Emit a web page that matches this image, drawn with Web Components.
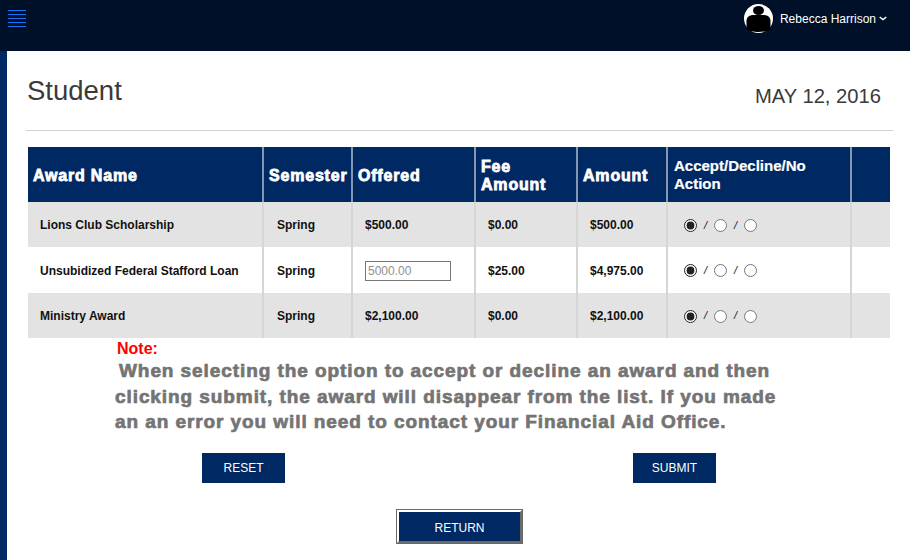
<!DOCTYPE html>
<html lang="en">

<head>
    <meta charset="UTF-8">
    <title>Student</title>
    <style>
        html, body { margin: 0; padding: 0; background: #fff; }
        body { font-family: "Liberation Sans", Arial, sans-serif; }
    </style>
</head>

<body>
    <template id="t-topbar">
        <style>
            :host { display: flex; height: 51px; background: #001029; justify-content: space-between; box-sizing: border-box; }
            .burger { display: flex; flex-direction: column; gap: 3px; width: 18px; margin: 10px 0 0 8px; }
            .burger i { display: block; height: 1px; background: #1673f5; }
            .user { display: flex; align-items: center; height: 37px; color: #fff; font-size: 12px; margin-right: 23px; }
            svg { margin-right: 7px; }
            .chev { margin: 0 0 0 3px; }
        </style>
        <div class="burger"><i></i><i></i><i></i><i></i><i></i></div>
        <div class="user">
            <svg width="29" height="29" viewBox="0 0 29 29">
                <circle cx="14.5" cy="14.5" r="14.5" fill="#fff"/>
                <ellipse cx="14.5" cy="6.500" rx="5.500" ry="4.500" fill="#000"/>
                <path d="M2.500 17c0-4 3-6 7-6h10c4 0 7 2 7 6v8c-2 2-7 3-12 3s-10-1-12-3z" fill="#000"/>
            </svg>
            <span class="name"><slot></slot></span>
            <svg class="chev" width="8" height="5" viewBox="0 0 8 5"><path d="M.7 1l3.300 2.500L7.300 1" fill="none" stroke="#fff" stroke-width="1.500"/></svg>
        </div>
    </template>

    <template id="t-heading">
        <style>
            :host { display: flex; justify-content: space-between; width: 867px; height: 79px; border-bottom: 1px solid #d0d0d0; color: #3a3a3a; }
            h1 { margin: 24px 0 0 1px; font-size: 27.500px; line-height: 32px; font-weight: 400; }
            .date { margin: 33px 12px 0 0; font-size: 20.200px; line-height: 24px; }
        </style>
        <h1><slot name="title"></slot></h1>
        <div class="date"><slot name="date"></slot></div>
    </template>

    <template id="t-table">
        <style>
            :host { display: block; width: 862px; margin: 16px 0 0 2px; }
            .head { display: grid; grid-template-columns: 236px 89px 123px 102px 90px 184px 37px; height: 55px; background: #002862; color: #fff; font-size: 16px; line-height: 18px; font-weight: 700; -webkit-text-stroke: .8px #fff; letter-spacing: .8px; }
            .head div { display: flex; align-items: center; box-sizing: border-box; padding: 2px 0 0 5px; border-right: 2px solid #8496b2; white-space: nowrap; }
            .head div:last-child { border: 0; }
            .head .plain { padding: 0 0 0 6px; font-size: 15px; letter-spacing: 0; -webkit-text-stroke: .2px #fff; }
        </style>
        <div class="head">
            <div>Award Name</div>
            <div>Semester</div>
            <div>Offered</div>
            <div>Fee<br>Amount</div>
            <div>Amount</div>
            <div class="plain">Accept/Decline/No<br>Action</div>
            <div></div>
        </div>
        <slot></slot>
    </template>

    <template id="t-row">
        <style>
            :host { display: grid; grid-template-columns: 236px 89px 123px 102px 90px 184px 37px; height: 45.340px; font-size: 12px; font-weight: 700; color: #111; }
            :host([shade]) { background: #e3e3e3; }
            div { display: flex; align-items: center; box-sizing: border-box; border-right: 2px solid #d6d6d6; }
            div:last-child { border: 0; }
            .name { padding-left: 12px; }
            .sem { padding-left: 13px; }
            .off { padding-left: 12px; }
            .fee { padding-left: 12px; }
            .amt { padding-left: 12px; }
            :host([low]) .name, :host([low]) .sem, :host([low]) .off, :host([low]) .fee, :host([low]) .amt { padding-top: 2px; }
            .act { padding-left: 16px; font-weight: 400; font-style: italic; font-size: 11px; }
            input[type=radio] { width: 13px; height: 13px; margin: 2px 0 0; accent-color: #222; }
            .act span { width: 17px; text-align: center; }
            ::slotted(input) { box-sizing: border-box; width: 86px; height: 20px; margin: 0; padding: 0 2px; border: 1px solid #767676; font: 12px "Liberation Sans", Arial, sans-serif; background: #fff; }
            ::slotted(input)::placeholder { color: #8f8f8f; }
        </style>
        <div class="name"></div>
        <div class="sem"></div>
        <div class="off"><slot></slot></div>
        <div class="fee"></div>
        <div class="amt"></div>
        <div class="act">
            <input type="radio" checked><span>/</span><input type="radio"><span>/</span><input type="radio">
        </div>
        <div></div>
    </template>

    <template id="t-note">
        <style>
            :host { display: block; margin: 0 0 0 89px; width: 668px; }
            .label { color: #f00; font-size: 16px; line-height: 19.300px; font-weight: 700; margin-left: 2px; padding-top: 1px; }
            p { margin: 0; color: #747474; font-size: 19px; line-height: 25.500px; font-weight: 700; -webkit-text-stroke: .7px #747474; letter-spacing: .92px; text-indent: 4px; }
        </style>
        <div class="label"><slot name="label"></slot></div>
        <p><slot></slot></p>
    </template>

    <template id="t-button">
        <style>
            :host { display: inline-flex; align-items: center; justify-content: center; box-sizing: border-box; width: 83px; height: 30px; background: #002862; color: #fff; font-size: 12px; }
            :host([framed]) { width: 127px; height: 35px; padding-top: 2px; border: 3px solid; border-color: #fff #6b6b6b #6b6b6b #fff; outline: 1px solid #6b6b6b; outline-offset: -1px; }
        </style>
        <slot></slot>
    </template>

    <template id="t-page">
        <style>
            :host { display: block; }
            .body { display: block; border-left: 7px solid #002862; height: 509px; box-sizing: border-box; padding: 0 0 0 19px; }
            .btns { display: flex; justify-content: space-between; margin: 18.700px 0 0 176px; width: 514px; }
            .ret { display: flex; justify-content: center; margin: 26px 0 0 370px; width: 127px; }
        </style>
        <slot name="top"></slot>
        <div class="body">
            <slot name="heading"></slot>
            <slot name="table"></slot>
            <slot name="note"></slot>
            <div class="btns"><slot name="actions"></slot></div>
            <div class="ret"><slot name="back"></slot></div>
        </div>
    </template>

    <student-page>
        <app-topbar slot="top">Rebecca Harrison</app-topbar>
        <page-heading slot="heading">
            <span slot="title">Student</span>
            <span slot="date">MAY 12, 2016</span>
        </page-heading>
        <award-table slot="table">
            <award-row shade name="Lions Club Scholarship" sem="Spring" fee="$0.00" amt="$500.00">$500.00</award-row>
            <award-row low name="Unsubidized Federal Stafford Loan" sem="Spring" fee="$25.00" amt="$4,975.00"><input placeholder="5000.00"></award-row>
            <award-row shade low name="Ministry Award" sem="Spring" fee="$0.00" amt="$2,100.00">$2,100.00</award-row>
        </award-table>
        <award-note slot="note">
            <span slot="label">Note:</span>
            When selecting the option to accept or decline an award and then clicking submit, the award will disappear from the list. If you made an an error you will need to contact your Financial Aid Office.
        </award-note>
        <action-button slot="actions">RESET</action-button>
        <action-button slot="actions">SUBMIT</action-button>
        <action-button slot="back" framed>RETURN</action-button>
    </student-page>
</body>
<script>
    function simple(tag, id) {
        customElements.define(tag,
            class extends HTMLElement {
                constructor() {
                    super();
                    let template = document.getElementById(id);
                    this.attachShadow({ mode: 'open' }).appendChild(template.content.cloneNode(true));
                }
            }
        )
    }
    simple('student-page', 't-page')
    simple('app-topbar', 't-topbar')
    simple('page-heading', 't-heading')
    simple('award-table', 't-table')
    simple('award-note', 't-note')
    simple('action-button', 't-button')

    customElements.define('award-row',
        class extends HTMLElement {
            constructor() {
                super();
                let template = document.getElementById('t-row');
                this.attachShadow({ mode: 'open' }).appendChild(template.content.cloneNode(true));
            }
            connectedCallback() {
                let root = this.shadowRoot
                root.querySelector('.name').textContent = this.getAttribute('name')
                root.querySelector('.sem').textContent = this.getAttribute('sem')
                root.querySelector('.fee').textContent = this.getAttribute('fee')
                root.querySelector('.amt').textContent = this.getAttribute('amt')
            }
        }
    )
</script>

</html>
